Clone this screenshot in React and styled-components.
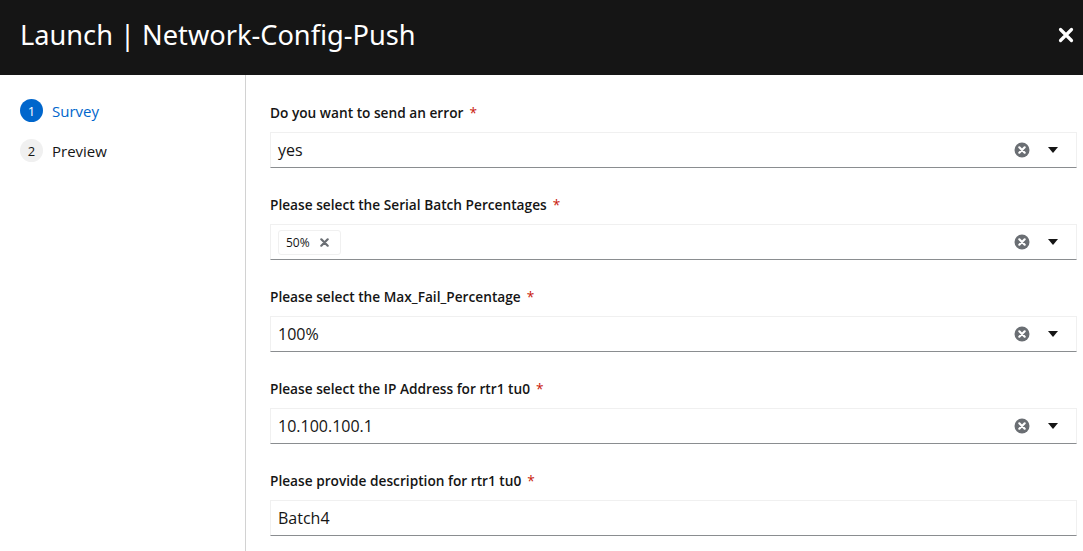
import styled, { createGlobalStyle } from 'styled-components';

const GlobalStyle = createGlobalStyle`
    html, body {
        margin: 0;
        padding: 0;
        background: #ffffff;
        font-family: "Open Sans", "Liberation Sans", sans-serif;
        color: #151515;
    }
`;

const Wizard = styled.div`
    width: 1083px;
    height: 551px;
    display: flex;
    flex-direction: column;
    overflow: hidden;
`;

const Header = styled.header`
    height: 75px;
    flex-shrink: 0;
    background: #151515;
    display: flex;
    align-items: center;
    justify-content: space-between;
    padding: 0 3px 6px 20px;
    box-sizing: border-box;
`;

const Title = styled.h1`
    margin: 0;
    color: #ffffff;
    font-family: "Noto Sans", "Open Sans", sans-serif;
    font-size: 27.2px;
    font-weight: 400;
`;

const CloseButton = styled.button`
    background: none;
    border: none;
    padding: 6px;
    display: flex;
    cursor: pointer;
`;

const Main = styled.div`
    flex: 1;
    display: flex;
    min-height: 0;
`;

const Nav = styled.nav`
    width: 246px;
    flex-shrink: 0;
    border-right: 1px solid #d2d2d2;
    padding: 24px 0 0 20px;
    box-sizing: border-box;
    display: flex;
    flex-direction: column;
    gap: 17px;
`;

const Step = styled.div`
    display: flex;
    align-items: center;
    gap: 9px;
    font-size: 15px;
    color: ${(p) => (p.$active ? '#0066cc' : '#151515')};
`;

const StepNum = styled.span`
    width: 23px;
    height: 23px;
    border-radius: 50%;
    display: flex;
    align-items: center;
    justify-content: center;
    font-size: 13px;
    background: ${(p) => (p.$active ? '#0066cc' : '#f0f0f0')};
    color: ${(p) => (p.$active ? '#ffffff' : '#151515')};
`;

const Body = styled.div`
    flex: 1;
    padding: 25px 6px 0 24px;
    display: flex;
    flex-direction: column;
    gap: 24px;
`;

const Group = styled.div`
    display: flex;
    flex-direction: column;
    gap: 8px;
`;

const Label = styled.label`
    height: 24px;
    display: flex;
    align-items: center;
    font-size: 13.7px;
    font-weight: 600;
`;

const Required = styled.span`
    color: #c9190b;
    margin-left: 6px;
    font-weight: 400;
`;

const Field = styled.div`
    height: 36px;
    box-sizing: border-box;
    border: 1px solid #f0f0f0;
    border-bottom-color: #8a8d90;
    display: flex;
    align-items: center;
    padding: 0 8px 0 7px;
    font-size: 16px;
`;

const Value = styled.span`
    flex: 1;
`;

const Chips = styled.div`
    flex: 1;
    display: flex;
`;

const Chip = styled.span`
    display: inline-flex;
    align-items: center;
    gap: 10px;
    height: 25px;
    padding: 0 11px 0 7px;
    box-sizing: border-box;
    border: 1px solid #f0f0f0;
    border-radius: 3px;
    font-size: 12px;
`;

const Controls = styled.div`
    display: flex;
    align-items: center;
    gap: 18px;
    padding-right: 10px;
`;

const CircleX = () => (
    <svg width="16" height="16" viewBox="0 0 16 16">
        <circle cx="8" cy="8" r="7.5" fill="#6a6e73" />
        <path d="M5.3 5.3 L10.7 10.7 M10.7 5.3 L5.3 10.7" stroke="#fff" strokeWidth="2.2" strokeLinecap="round" />
    </svg>
);

const Caret = () => (
    <svg width="10" height="6" viewBox="0 0 10 6">
        <path d="M0 0 H10 L5 6 Z" fill="#151515" />
    </svg>
);

const SmallX = () => (
    <svg width="9" height="9" viewBox="0 0 9 9">
        <path d="M1.3 1.3 L7.7 7.7 M7.7 1.3 L1.3 7.7" stroke="#6a6e73" strokeWidth="2.2" strokeLinecap="round" />
    </svg>
);

const questions = [
    { label: 'Do you want to send an error', value: 'yes', select: true },
    { label: 'Please select the Serial Batch Percentages', chips: ['50%'], select: true },
    { label: 'Please select the Max_Fail_Percentage', value: '100%', select: true },
    { label: 'Please select the IP Address for rtr1 tu0', value: '10.100.100.1', select: true },
    { label: 'Please provide description for rtr1 tu0', value: 'Batch4' },
];

function App() {
    return (
        <>
            <GlobalStyle />
            <Wizard>
                <Header>
                    <Title>Launch | Network-Config-Push</Title>
                    <CloseButton aria-label="Close">
                        <svg width="16" height="16" viewBox="0 0 16 16">
                            <path d="M2.5 2.5 L13.5 13.5 M13.5 2.5 L2.5 13.5" stroke="#ffffff" strokeWidth="3.2" strokeLinecap="round" />
                        </svg>
                    </CloseButton>
                </Header>
                <Main>
                    <Nav>
                        <Step $active>
                            <StepNum $active>1</StepNum>
                            Survey
                        </Step>
                        <Step>
                            <StepNum>2</StepNum>
                            Preview
                        </Step>
                    </Nav>
                    <Body>
                        {questions.map((q) => (
                            <Group key={q.label}>
                                <Label>
                                    {q.label}
                                    <Required>*</Required>
                                </Label>
                                <Field>
                                    {q.chips ? (
                                        <Chips>
                                            {q.chips.map((c) => (
                                                <Chip key={c}>
                                                    {c}
                                                    <SmallX />
                                                </Chip>
                                            ))}
                                        </Chips>
                                    ) : (
                                        <Value>{q.value}</Value>
                                    )}
                                    {q.select && (
                                        <Controls>
                                            <CircleX />
                                            <Caret />
                                        </Controls>
                                    )}
                                </Field>
                            </Group>
                        ))}
                    </Body>
                </Main>
            </Wizard>
        </>
    );
}

export default App;
